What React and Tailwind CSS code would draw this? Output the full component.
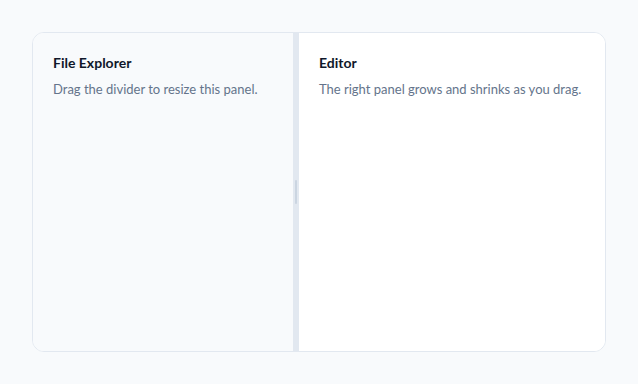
export default function App() {
  return (
    <div className="w-[638px] h-[384px] bg-[#f8fafc] p-8" style={{ fontFamily: 'Lato, "Noto Sans", sans-serif' }}>
      <div className="flex h-[320px] w-[574px] overflow-hidden rounded-xl border border-[#e2e8f0] bg-white">
        <div className="w-[260px] shrink-0 bg-[#f8fafc] p-5">
          <h2 className="text-[14px] font-bold leading-5 text-[#0f172a]">File Explorer</h2>
          <p className="mt-1.5 text-[13px] leading-5 text-[#64748b]">Drag the divider to resize this panel.</p>
        </div>
        <div className="flex w-[6px] shrink-0 items-center justify-center bg-[#e2e8f0]">
          <div className="h-6 w-[2px] rounded-full bg-[#cbd5e1]" />
        </div>
        <div className="flex-1 bg-white p-5">
          <h2 className="text-[14px] font-bold leading-5 text-[#0f172a]">Editor</h2>
          <p className="mt-1.5 text-[13px] leading-5 text-[#64748b]">The right panel grows and shrinks as you drag.</p>
        </div>
      </div>
    </div>
  );
}
